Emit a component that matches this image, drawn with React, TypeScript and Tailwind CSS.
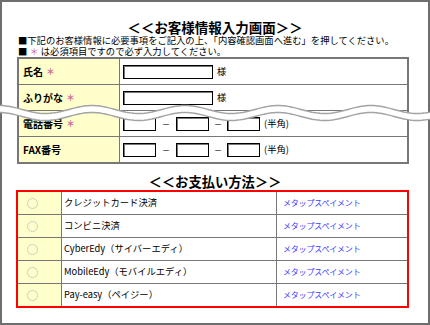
import React from 'react'

const font = '[font-family:"Noto_Sans_CJK_JP","Noto_Sans",sans-serif]'

const payments = [
  'クレジットカード決済',
  'コンビニ決済',
  'CyberEdy（サイバーエディ）',
  'MobileEdy（モバイルエディ）',
  'Pay-easy（ペイジー）',
]

function Mark() {
  return <span className="ml-[3px] text-[9px] text-[#cc6699]">＊</span>
}

const box = 'h-[14px] border border-black bg-white shadow-[inset_1px_1px_0_#777]'

function PhoneInputs() {
  return (
    <div className="flex items-center">
      <div className={`${box} w-[33px]`} />
      <span className="w-[20px] text-center text-[8px] leading-none">－</span>
      <div className={`${box} w-[33px]`} />
      <span className="w-[18px] text-center text-[8px] leading-none">－</span>
      <div className={`${box} w-[33px]`} />
      <span className="ml-[4px] text-[9.3px]">(半角)</span>
    </div>
  )
}

function FormRow({ label, mark, last, children }: { label: string; mark?: boolean; last?: boolean; children: React.ReactNode }) {
  return (
    <div className={`flex ${last ? 'h-[25px]' : 'h-[26px] border-b border-[#777]'}`}>
      <div className="flex w-[101px] items-center border-r border-[#777] bg-[#ffffcc] pl-[4px] text-[10px] font-bold">
        {label}
        {mark && <Mark />}
      </div>
      <div className="flex flex-1 items-center pl-[3px]">{children}</div>
    </div>
  )
}

function Wave() {
  const top: string[] = []
  const bottom: string[] = []
  for (let x = -4; x <= 434; x += 2) {
    const yc = 113 - 4 * Math.cos((2 * Math.PI * (x - 92)) / 93)
    top.push(`${x},${(yc - 3.5).toFixed(2)}`)
    bottom.push(`${x},${(yc + 3.5).toFixed(2)}`)
  }
  const fill = `M${top.join(' L')} L${[...bottom].reverse().join(' L')} Z`
  return (
    <svg className="pointer-events-none absolute left-0 top-0" width="430" height="325">
      <path d={fill} fill="#fff" />
      <path d={`M${top.join(' L')}`} fill="none" stroke="#a4a4a4" strokeWidth="1.5" />
      <path d={`M${bottom.join(' L')}`} fill="none" stroke="#a4a4a4" strokeWidth="1.5" />
    </svg>
  )
}

export default function App() {
  return (
    <div className={`relative h-[325px] w-[430px] bg-white text-black ${font}`}>
      <div className="h-full border-2 border-[#6e6e6e] px-[15px] pt-[18px]">
        <div className="h-[15px] text-center text-[13.5px] font-bold leading-[15px]">＜＜お客様情報入力画面＞＞</div>
        <div className="pl-[1px] text-[9.3px]">
          <div className="h-[11px] leading-[11px]">■下記のお客様情報に必要事項をご記入の上、「内容確認画面へ進む」を押してください。</div>
          <div className="h-[11px] leading-[11px]">
            ■ <span className="text-[#cc6699]">＊</span> は必須項目ですので必ず入力してください。
          </div>
        </div>

        <div className="w-[392px] border-2 border-[#777]">
          <FormRow label="氏名" mark>
            <div className={`${box} w-[90px]`} />
            <span className="ml-[4px] text-[9.3px]">様</span>
          </FormRow>
          <FormRow label="ふりがな" mark>
            <div className={`${box} w-[90px]`} />
            <span className="ml-[4px] text-[9.3px]">様</span>
          </FormRow>
          <FormRow label="電話番号" mark>
            <PhoneInputs />
          </FormRow>
          <FormRow label="FAX番号" last>
            <PhoneInputs />
          </FormRow>
        </div>

        <div className="mt-[11px] h-[14px] text-center text-[13.3px] font-bold leading-[14px]">＜＜お支払い方法＞＞</div>

        <div className="-ml-px mt-px w-[393px] border-2 border-[#ff0000]">
          {payments.map((p, i) => (
            <div key={p} className={`flex ${i < payments.length - 1 ? 'h-[23px] border-b border-[#777]' : 'h-[22px]'}`}>
              <div className="flex w-[44px] items-center border-r border-[#777] bg-[#ffffcc] pl-[9px]">
                <span className="h-[11px] w-[11px] rounded-full border border-[#cfcfc0]" />
              </div>
              <div className="flex w-[215px] items-center border-r border-[#777] pl-[2px] text-[9.3px]">{p}</div>
              <div className="flex flex-1 items-center pl-[6px] text-[8px] tracking-[-0.2px] text-[#3b3bff]">メタップスペイメント</div>
            </div>
          ))}
        </div>
      </div>
      <Wave />
    </div>
  )
}
